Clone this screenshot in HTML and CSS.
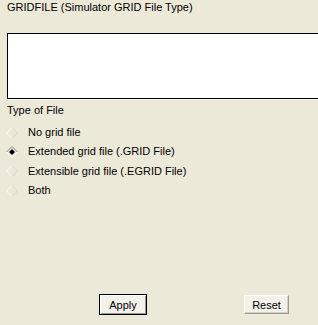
FILE: index.html
```html
<!DOCTYPE html>
<html>
<head>
<meta charset="utf-8">
<link rel="stylesheet" href="styles.css">
</head>
<body>
<div class="panel">
  <div class="title">GRIDFILE (Simulator GRID File Type)</div>
  <div class="textbox"></div>
  <div class="group-label">Type of File</div>
  <div class="radios">
    <div class="radio">
      <svg class="diamond" width="14" height="14" viewBox="0 0 14 14"><path d="M1.5 7 L7 1.5 L12.5 7" fill="none" stroke="#ffffff" stroke-width="1"/><path d="M1.5 7 L7 12.5" fill="none" stroke="#ffffff" stroke-width="1"/><path d="M7 1.5 L12.5 7 L7 12.5" fill="none" stroke="#d6d2c0" stroke-width="1"/></svg>
      <span>No grid file</span>
    </div>
    <div class="radio">
      <svg class="diamond" width="14" height="14" viewBox="0 0 14 14"><path d="M1.5 7 L7 1.5 L12.5 7" fill="none" stroke="#8e8b7c" stroke-width="1"/><path d="M1.5 7 L7 12.5 L12.5 7" fill="none" stroke="#ffffff" stroke-width="1"/><path d="M7 4 L10 7 L7 10 L4 7 Z" fill="#000"/></svg>
      <span>Extended grid file (.GRID File)</span>
    </div>
    <div class="radio">
      <svg class="diamond" width="14" height="14" viewBox="0 0 14 14"><path d="M1.5 7 L7 1.5 L12.5 7" fill="none" stroke="#ffffff" stroke-width="1"/><path d="M1.5 7 L7 12.5" fill="none" stroke="#ffffff" stroke-width="1"/><path d="M7 1.5 L12.5 7 L7 12.5" fill="none" stroke="#d6d2c0" stroke-width="1"/></svg>
      <span>Extensible grid file (.EGRID File)</span>
    </div>
    <div class="radio">
      <svg class="diamond" width="14" height="14" viewBox="0 0 14 14"><path d="M1.5 7 L7 1.5 L12.5 7" fill="none" stroke="#ffffff" stroke-width="1"/><path d="M1.5 7 L7 12.5" fill="none" stroke="#ffffff" stroke-width="1"/><path d="M7 1.5 L12.5 7 L7 12.5" fill="none" stroke="#d6d2c0" stroke-width="1"/></svg>
      <span>Both</span>
    </div>
  </div>
  <div class="buttons">
    <button class="btn btn-default">Apply</button>
    <button class="btn">Reset</button>
  </div>
</div>
</body>
</html>
```
FILE: styles.css
```css
html, body {
  margin: 0;
  padding: 0;
  background: #ECE9D8;
  overflow: hidden;
}
.panel {
  width: 318px;
  height: 325px;
  font-family: "Liberation Sans", Arial, sans-serif;
  font-size: 11px;
  color: #000;
  display: flex;
  flex-direction: column;
}
.title {
  padding-left: 7px;
  margin-top: 1px;
  line-height: 13px;
  height: 13px;
}
.textbox {
  margin-top: 19px;
  margin-left: 7px;
  height: 64px;
  background: #fff;
  border: 1px solid #000;
  border-right: none;
  box-shadow: 0 1px 0 #f6f5ee;
}
.group-label {
  margin-top: 5px;
  padding-left: 7px;
  line-height: 13px;
  height: 13px;
}
.radios {
  margin-top: 6px;
  display: flex;
  flex-direction: column;
}
.radio {
  display: flex;
  align-items: center;
  height: 19.3px;
  padding-left: 5px;
}
.diamond {
  display: block;
  flex: none;
}
.radio span {
  margin-left: 9px;
  line-height: 13px;
}
.buttons {
  margin-top: auto;
  margin-bottom: 10px;
  display: flex;
  align-items: center;
}
.btn {
  font-family: "Liberation Sans", Arial, sans-serif;
  font-size: 11px;
  color: #000;
  background: #f2f1ea;
  border: 1px solid;
  border-color: #fff #9d9a8c #9d9a8c #fff;
  padding: 0;
  height: 19px;
  width: 45px;
  box-shadow: inset -1px -1px 0 #d4d0c8;
}
.btn-default {
  margin-left: 99px;
  width: 48px;
  height: 21px;
  border: 1px solid #000;
  box-shadow: inset 1px 1px 0 #fff, inset -1px -1px 0 #9d9a8c;
}
.btn + .btn {
  margin-left: 97px;
}
```
